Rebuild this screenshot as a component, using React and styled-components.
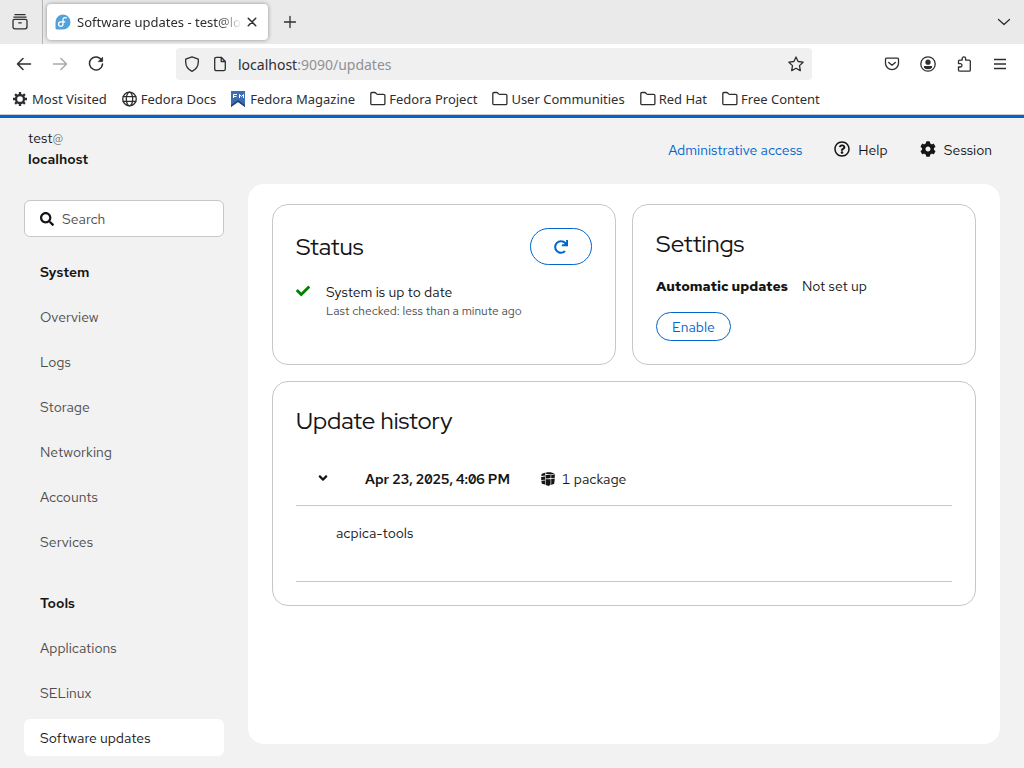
import React from "react";
import styled, { createGlobalStyle } from "styled-components";
import { FaSearch, FaCheck, FaRedo, FaAngleDown, FaRegQuestionCircle, FaCog } from "react-icons/fa";

const Global = createGlobalStyle`
  * { box-sizing: border-box; }
  body { margin: 0; background: #f2f2f2; color: #151515; font: 14px/21px "Red Hat Text", Inter, "Liberation Sans", sans-serif; }
  h2, h3, p, ul { margin: 0; padding: 0; }
  ul { list-style: none; }
  button, input { font: inherit; color: inherit; }
  a { text-decoration: none; color: inherit; }
  svg { flex: none; display: block; }
`;

const Window = styled.div`
  display: flex;
  flex-direction: column;
  min-height: 100vh;
`;

/* Browser chrome */
const Chrome = styled.header`
  background: #fff;
  color: #2e2e32;
  font: 14px/20px "Noto Sans", sans-serif;
  border-bottom: 1px solid #cccccc;
`;
const TabStrip = styled.div`
  display: flex;
  align-items: center;
  height: 44px;
  background: #eaeaeb;
`;
const IconButton = styled.button`
  display: flex;
  align-items: center;
  justify-content: center;
  width: ${(p) => p.$w || 36}px;
  height: 32px;
  padding: 0;
  border: 0;
  background: transparent;
  color: ${(p) => (p.disabled ? "#a9a9ab" : "#2e2e32")};
`;
const StripStart = styled.div`
  display: flex;
  align-items: center;
  align-self: stretch;
  padding-left: 2px;
  width: 43px;
  border-right: 1px solid #b5b5b7;
`;
const Tab = styled.div`
  display: flex;
  align-items: center;
  width: 221px;
  height: 36px;
  margin: 0 4px;
  padding: 0 6px 0 8px;
  border-radius: 4px;
  background: #fff;
  box-shadow: 0 0 4px rgba(0, 0, 0, 0.4);
`;
const TabTitle = styled.span`
  flex: 1;
  min-width: 0;
  margin-left: 6px;
  overflow: hidden;
  white-space: nowrap;
  font-size: 13px;
  mask-image: linear-gradient(to left, transparent, #000 24px);
`;
const Spacer = styled.div`
  flex: ${(p) => (p.$w ? `0 0 ${p.$w}px` : 1)};
`;
const Toolbar = styled.div`
  display: flex;
  align-items: center;
  height: 40px;
  padding: 0 6px;
`;
const UrlBar = styled.div`
  display: flex;
  align-items: center;
  flex: 1;
  height: 32px;
  padding: 0 2px;
  border-radius: 4px;
  background: #f0f0f1;
`;
const Url = styled.span`
  flex: 1;
  margin-left: 4px;
  padding-top: 2px;
  color: #919193;
  b { font-weight: 400; color: #2e2e32; }
`;
const Bookmarks = styled.nav`
  display: flex;
  align-items: center;
  gap: 15px;
  height: 30px;
  padding: 0 12px 0 13px;
  overflow: hidden;
`;
const Bookmark = styled.a`
  display: flex;
  align-items: center;
  gap: 3px;
  white-space: nowrap;
  font-size: 13px;
`;

/* Console shell */
const Shell = styled.div`
  flex: 1;
  display: flex;
  flex-direction: column;
  border-top: 3px solid #0066cc;
`;
const Masthead = styled.div`
  display: flex;
  align-items: center;
  justify-content: space-between;
  height: 66px;
  padding: 0 32px 0 28px;
`;
const Host = styled.div`
  padding-bottom: 4px;
  span { color: #6a6e73; }
  strong { display: block; font-weight: 600; }
`;
const Actions = styled.div`
  display: flex;
  align-items: center;
  gap: 32px;
  padding-bottom: 2px;
`;
const Action = styled.button`
  display: flex;
  align-items: center;
  gap: 8px;
  padding: 0;
  border: 0;
  background: transparent;
  color: ${(p) => (p.$link ? "#0066cc" : "#151515")};
  svg { margin-bottom: 2px; }
`;
const Body = styled.div`
  flex: 1;
  display: grid;
  grid-template-columns: 200px minmax(0, 1fr);
  gap: 24px;
  padding: 0 24px;
`;
const Sidebar = styled.aside`
  padding: 16px 0 12px;
`;
const SearchBox = styled.label`
  display: flex;
  align-items: center;
  gap: 8px;
  height: 37px;
  padding: 0 15px;
  border: 1px solid #c7c7c7;
  border-radius: 6px;
  background: #fff;
  input {
    flex: 1;
    min-width: 0;
    padding: 2px 0 0;
    border: 0;
    outline: 0;
    background: transparent;
  }
  input::placeholder { color: #4d4d4d; opacity: 1; }
`;
const NavGroup = styled.section`
  margin-top: ${(p) => p.$top}px;
`;
const NavTitle = styled.h2`
  padding: 9px 16px 7px;
  font-size: 14px;
  line-height: 21px;
  font-weight: 600;
`;
const NavList = styled.ul`
  display: flex;
  flex-direction: column;
  gap: 8px;
  padding-top: 8px;
`;
const NavLink = styled.a`
  display: block;
  padding: 9px 16px 7px;
  border-radius: 6px;
  color: ${(p) => (p.$current ? "#151515" : "#4d4d4d")};
  background: ${(p) => (p.$current ? "#fff" : "transparent")};
`;
const Main = styled.main`
  display: grid;
  grid-template-columns: 1fr 1fr;
  align-content: start;
  gap: 16px;
  margin-bottom: 24px;
  padding: 20px 24px;
  border-radius: 16px;
  background: #fff;
`;
const Card = styled.section`
  grid-column: ${(p) => (p.$wide ? "1 / -1" : "auto")};
  padding: 23px;
  border: 1px solid #c7c7c7;
  border-radius: 16px;
`;
const CardHead = styled.div`
  display: flex;
  align-items: center;
  justify-content: space-between;
`;
const CardTitle = styled.h2`
  font: 400 24px/31px "Red Hat Display", Inter, "Liberation Sans", sans-serif;
`;
const PillButton = styled.button`
  display: flex;
  align-items: center;
  justify-content: center;
  height: ${(p) => (p.$small ? 29 : 37)}px;
  padding: ${(p) => (p.$small ? "2px 15px 0" : "0 23px")};
  border: 1px solid #0066cc;
  border-radius: 20px;
  background: #fff;
  color: #0066cc;
`;
const StatusRow = styled.div`
  display: flex;
  gap: 16px;
  margin-top: 16px;
  padding-bottom: 20px;
  line-height: 22px;
  svg { margin-top: 3px; color: #008000; }
`;
const Muted = styled.p`
  font-size: 12px;
  line-height: 16px;
  color: #4d4d4d;
`;
const SettingRow = styled.dl`
  display: flex;
  gap: 14px;
  margin: 17px 0 15px;
  dt { font-weight: 700; }
  dd { margin: 0; }
`;
const HistoryTable = styled.table`
  width: 100%;
  margin-top: 16px;
  border-collapse: collapse;
  font-variant-numeric: tabular-nums slashed-zero;
  tr { border-bottom: 1px solid #c7c7c7; }
  td { padding: 0; }
`;
const Entry = styled.div`
  display: flex;
  align-items: center;
  height: 53px;
  padding-top: 1px;
  strong { font-weight: 600; }
`;
const Toggle = styled.button`
  width: 53px;
  padding: 0 0 2px 20px;
  margin-right: 16px;
  border: 0;
  background: transparent;
`;
const Count = styled.span`
  display: flex;
  align-items: center;
  gap: 7px;
  margin-left: 31px;
`;
const Packages = styled.div`
  height: 75px;
  padding: 17px 40px;
`;

const Line = ({ size = 16, children, ...rest }) => (
  <svg width={size} height={size} viewBox="0 0 16 16" fill="none" stroke="currentColor" strokeWidth="1.3" strokeLinecap="round" strokeLinejoin="round" aria-hidden="true" {...rest}>
    {children}
  </svg>
);
const Folder = () => (
  <Line><path d="M.8 12.4V2.8Q.8 1.500 2.100 1.500h2.600q.7 0 1.100.5l.8.9q.4.4 1 .4h6q1.300 0 1.300 1.300v7.800q0 1.300-1.300 1.300H2.100Q.8 13.700.8 12.400z" /></Line>
);
const Gear = () => (
  <Line>
    <circle cx="7" cy="8" r="4" strokeWidth="2.3" />
    <path strokeWidth="2.3" strokeLinecap="butt" d="M7 4V1M7 12v3M3 8H0M11 8h3M4.200 5.200 2.100 3.100M9.800 10.800l2.100 2.100M4.200 10.800l-2.100 2.100M9.800 5.200l2.100-2.100" />
  </Line>
);
const Globe = () => (
  <Line><circle cx="7.500" cy="8" r="6.800" /><ellipse cx="7.500" cy="8" rx="3.200" ry="6.800" /><path d="M1.200 5.700h12.600M1.200 10.300h12.600" /></Line>
);
const MagazineIcon = () => (
  <svg width="16" height="16" viewBox="0 0 16 16" aria-hidden="true">
    <path fill="#3c6eb4" d="M0 0h14v16l-7-5-7 5z" />
    <path fill="#294172" d="M0 16v-2l7-5 7 5v2l-7-5z" />
    <path fill="none" stroke="#fff" d="M2.500 7V3.500H6M2.500 5.500h3M8.500 7V3.500l2 2 2-2V7" />
  </svg>
);
const FedoraIcon = () => (
  <svg width="16" height="16" viewBox="0 0 16 16" aria-hidden="true">
    <path fill="#51a2da" d="M8 .5A7.500 7.500 0 0 0 .5 8v6q0 1.500 1.500 1.500h6A7.500 7.500 0 0 0 8 .5z" />
    <path fill="none" stroke="#fff" strokeWidth="1.300" strokeLinecap="round" d="M11.300 3.900C9.500 3 8 4 8 5.800v4.300a2.200 2.200 0 1 1-2.300-2.200h4" />
  </svg>
);
const PackageIcon = () => (
  <svg width="14" height="14" viewBox="0 0 14 14" aria-hidden="true">
    <path fill="#151515" d="M.8 1.700 4.800.5 4.200 2v1.600L.2 4zM5.500.3h4l4.200 1.300-4 .8-4.700-.3zM4.600 2.900l5 .2v3q-2.500.8-5 .3zM10.200 3.100l3.600-.9v3.500l-3.600.6zM.2 4.900 4 4.600v3.200l-3.800.3zM4.600 7.100q2.500.5 5 0v5.400L7.800 13.900l-3.200-.9zM10.200 7.100l3.600-.5-.6 5.200-3 1.200zM.3 8.800 4 8.600v4L.9 11.700z" />
  </svg>
);

const bookmarks = [
  ["Most Visited", Gear],
  ["Fedora Docs", Globe],
  ["Fedora Magazine", MagazineIcon],
  ["Fedora Project", Folder],
  ["User Communities", Folder],
  ["Red Hat", Folder],
  ["Free Content", Folder],
];
const groups = [
  { title: "System", top: 16, items: ["Overview", "Logs", "Storage", "Networking", "Accounts", "Services"] },
  { title: "Tools", top: 24, items: ["Applications", "SELinux", "Software updates"] },
];

function Browser() {
  return (
    <Chrome>
      <TabStrip>
        <StripStart>
          <IconButton aria-label="Recent browsing">
            <Line><path d="M3 .7h10M1.900 3.200h12.200M2.500 5.300h11q1.500 0 1.500 1.500v6q0 2-2 2H3q-2 0-2-2v-6q0-1.500 1.500-1.500zM6.700 8.800h2.600" /></Line>
          </IconButton>
        </StripStart>
        <Tab>
          <FedoraIcon />
          <TabTitle>Software updates - test@lo</TabTitle>
          <IconButton $w={20} aria-label="Close tab"><Line size={12}><path strokeWidth="2" d="m3 3 10 10M13 3 3 13" /></Line></IconButton>
        </Tab>
        <IconButton aria-label="New tab"><Line><path d="M8 2.500v11M2.500 8h11" /></Line></IconButton>
        <Spacer />
        <IconButton $w={40} aria-label="List all tabs"><Line><path d="m2.500 5.500 5.500 5 5.500-5" /></Line></IconButton>
      </TabStrip>
      <Toolbar>
        <IconButton aria-label="Back"><Line><path strokeWidth="1.500" d="M14.500 8H1.500M7 2.500 1.500 8 7 13.500" /></Line></IconButton>
        <IconButton disabled aria-label="Forward"><Line><path strokeWidth="1.500" d="M1.500 8h13M9 2.500 14.500 8 9 13.500" /></Line></IconButton>
        <IconButton aria-label="Reload"><Line><path strokeWidth="1.500" d="M13.700 4.300A6.500 6.500 0 1 0 14.500 8" /><path fill="currentColor" d="M14.600 1.600v4h-4z" strokeWidth=".8" /></Line></IconButton>
        <Spacer $w={62} />
        <UrlBar>
          <IconButton $w={28} aria-label="Tracking protection"><Line><path d="M8 .9 1.700 3.200v2.900c0 4 2.500 7.500 6.300 9.200 3.800-1.700 6.300-5.200 6.300-9.200V3.200z" /></Line></IconButton>
          <IconButton $w={28} aria-label="Site information"><Line><path d="M2.700 3q0-1.700 1.700-1.700h4.900l4 4.200V13q0 1.700-1.700 1.700H4.400q-1.700 0-1.700-1.700zM9.200 1.500v4h4" /></Line></IconButton>
          <Url><b>localhost</b>:9090/updates</Url>
          <IconButton $w={28} aria-label="Bookmark this page"><Line><path d="m8 1 2.100 4.500 5 .7-3.600 3.400.8 5L8 12.300l-4.300 2.300.8-5L.9 6.200l5-.7z" /></Line></IconButton>
        </UrlBar>
        <Spacer $w={62} />
        <IconButton aria-label="Save to Pocket"><Line><path d="M2.500 2.200h11q1 0 1 1v4a6.500 6.500 0 0 1-13 0v-4q0-1 1-1zM4.700 6.400 8 9.200l3.300-2.800" /></Line></IconButton>
        <IconButton aria-label="Account"><Line><circle cx="8" cy="8" r="7.200" /><circle cx="8" cy="6.200" r="2" fill="currentColor" /><path fill="currentColor" d="M4.500 10.600h7v.7q-1.300 1.400-3.500 1.400t-3.500-1.400z" /></Line></IconButton>
        <IconButton aria-label="Extensions"><Line><path d="M6.200 4.100V2.600a1.700 1.700 0 0 1 3.400 0v1.500h3.500q1.200 0 1.200 1.200V14q0 1.200-1.200 1.200H3.700Q2.500 15.200 2.500 14v-3h1.800a1.700 1.700 0 0 0 0-3.400H2.500V5.300q0-1.200 1.200-1.200z" /></Line></IconButton>
        <IconButton aria-label="Menu"><Line><path strokeLinecap="butt" d="M2 3.500h12M2 8h12M2 12.500h12" /></Line></IconButton>
      </Toolbar>
      <Bookmarks aria-label="Bookmarks">
        {bookmarks.map(([name, Icon]) => (
          <Bookmark href="#" key={name}><Icon />{name}</Bookmark>
        ))}
      </Bookmarks>
    </Chrome>
  );
}

export default function App() {
  return (
    <Window>
      <Global />
      <Browser />
      <Shell>
        <Masthead>
          <Host>test<span>@</span><strong>localhost</strong></Host>
          <Actions>
            <Action $link>Administrative access</Action>
            <Action><FaRegQuestionCircle size={16} />Help</Action>
            <Action><FaCog size={16} />Session</Action>
          </Actions>
        </Masthead>
        <Body>
          <Sidebar>
            <SearchBox><FaSearch size={14} /><input type="text" placeholder="Search" aria-label="Search" /></SearchBox>
            {groups.map((g) => (
              <NavGroup key={g.title} $top={g.top}>
                <NavTitle>{g.title}</NavTitle>
                <NavList>
                  {g.items.map((item) => (
                    <li key={item}><NavLink href="#" $current={item === "Software updates"}>{item}</NavLink></li>
                  ))}
                </NavList>
              </NavGroup>
            ))}
          </Sidebar>
          <Main>
            <Card>
              <CardHead>
                <CardTitle>Status</CardTitle>
                <PillButton aria-label="Check for updates"><FaRedo size={14} /></PillButton>
              </CardHead>
              <StatusRow>
                <FaCheck size={14} />
                <div><p>System is up to date</p><Muted>Last checked: less than a minute ago</Muted></div>
              </StatusRow>
            </Card>
            <Card>
              <CardTitle>Settings</CardTitle>
              <SettingRow><dt>Automatic updates</dt><dd>Not set up</dd></SettingRow>
              <PillButton $small>Enable</PillButton>
            </Card>
            <Card $wide>
              <CardTitle>Update history</CardTitle>
              <HistoryTable>
                <tbody>
                  <tr>
                    <td>
                      <Entry>
                        <Toggle aria-label="Details" aria-expanded="true"><FaAngleDown size={14} /></Toggle>
                        <strong>Apr 23, 2025, 4:06 PM</strong>
                        <Count><PackageIcon />1 package</Count>
                      </Entry>
                    </td>
                  </tr>
                  <tr><td><Packages>acpica-tools</Packages></td></tr>
                </tbody>
              </HistoryTable>
            </Card>
          </Main>
        </Body>
      </Shell>
    </Window>
  );
}
